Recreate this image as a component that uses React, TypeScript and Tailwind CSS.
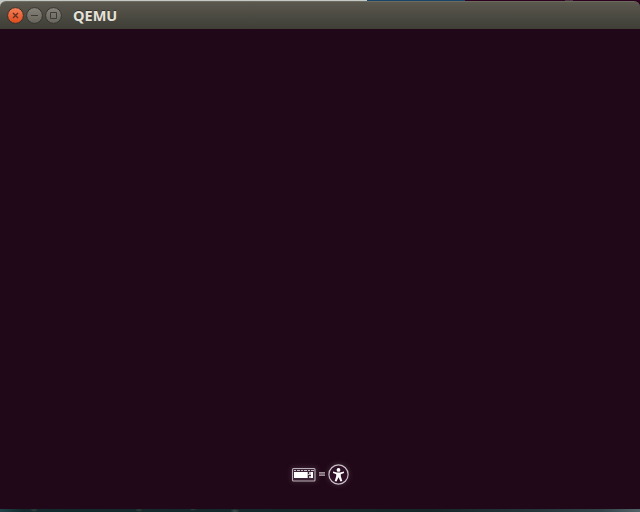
function TitleBar() {
  return (
    <header className="flex h-7 items-center rounded-t-[6px] border-t border-[#6b6b60] bg-linear-to-b from-[#5b584e] to-[#3e3e37] pl-[7px]">
      <svg width="56" height="19" viewBox="0 0 56 19" fill="none" className="shrink-0">
        <defs>
          <linearGradient id="close" x1="0" y1="0" x2="0" y2="1">
            <stop stopColor="#f58058" />
            <stop offset="1" stopColor="#df4b1d" />
          </linearGradient>
          <linearGradient id="grey" x1="0" y1="0" x2="0" y2="1">
            <stop stopColor="#858279" />
            <stop offset="1" stopColor="#66645b" />
          </linearGradient>
        </defs>
        <circle cx="8.5" cy="9.5" r="7.9" fill="url(#close)" stroke="#35322c" />
        <circle cx="27.5" cy="9.5" r="7.9" fill="url(#grey)" stroke="#35342e" />
        <circle cx="46.5" cy="9.5" r="7.9" fill="url(#grey)" stroke="#35342e" />
        <path d="M6 7l5 5M11 7l-5 5" stroke="#603020" strokeWidth="1.3" />
        <path d="M24 9.5h7" stroke="#3c3b37" />
        <path d="M43.5 6.5h6v6h-6z" stroke="#3c3b37" />
      </svg>
      <h1 className="ml-[10px] mt-px font-['Open_Sans','Noto_Sans',sans-serif] text-[14.5px] leading-5 font-bold text-[#e6e2d9] [text-shadow:0_-1px_0_#33322d]">QEMU</h1>
    </header>
  );
}

function BootIcons() {
  return (
    <svg width="74" height="36" viewBox="283 456 74 36" fill="none">
      <defs>
        <filter id="halo" x="-20%" y="-50%" width="140%" height="200%">
          <feGaussianBlur stdDeviation="2.5" />
        </filter>
      </defs>
      <g filter="url(#halo)" fill="#6d5266" opacity=".35">
        <rect x="291" y="467" width="26" height="15" />
        <circle cx="338.5" cy="474.5" r="11" />
      </g>
      <rect x="292.5" y="468.5" width="22.5" height="12.5" rx="1" fill="#3b2335" stroke="#b9afb6" strokeWidth="1.1" />
      <path d="M294 470.5h2m1 0h3m1 0h2m1 0h3m1 0h2m1 0h3" stroke="#c5bcc3" />
      <path d="M294 472h13v6h-13zM311 472h2v6h-2z" fill="#fff" />
      <path d="M307 472h1v6h-1zM309 472h2v2h-2zM309 476h2v2h-2z" fill="#c6bdc3" />
      <path d="M308 474.5h3" stroke="#b8aeb5" />
      <path d="M319 472.5h6M319 475.5h6" stroke="#9b8b96" />
      <path d="M319 473.5h6M319 474.5h6" stroke="#78656f" />
      <circle cx="338.5" cy="474.5" r="9.6" fill="#2d1026" stroke="#c8c0c6" strokeWidth="1.2" />
      <circle cx="338.5" cy="469.9" r="1.9" fill="#fff" />
      <path d="M333 471.5l4 .9h3l4-.9v1.5l-3.2 1.2v2.1l1.5 4.6-1.8.5-2-4.2-2 4.2-1.8-.5 1.5-4.6v-2.1l-3.2-1.2z" fill="#fff" />
    </svg>
  );
}

export default function App() {
  return (
    <div className="flex h-[512px] w-[640px] flex-col overflow-hidden bg-[linear-gradient(90deg,#c5c9c5_0_367px,#1a456a_367px_465px,#2c001e_465px_565px,#48333f_565px_573px,#2c001e_573px)] pt-px">
      <TitleBar />
      <main className="flex flex-1 items-end justify-center bg-[#200818] pb-[17px]">
        <BootIcons />
      </main>
      <div className="h-[3px] bg-[radial-gradient(ellipse_4px_2px_at_34px_1px,#34403c,transparent),radial-gradient(ellipse_4px_2px_at_139px_1px,#34403c,transparent),radial-gradient(ellipse_4px_2px_at_193px_0px,#34403c,transparent),radial-gradient(ellipse_5px_2px_at_235px_2px,#43504c,transparent),linear-gradient(90deg,#20434a_0,#132b2e_22px,#152729_430px,#25373b_540px,#314449_600px,#526268_640px)]" />
    </div>
  );
}
